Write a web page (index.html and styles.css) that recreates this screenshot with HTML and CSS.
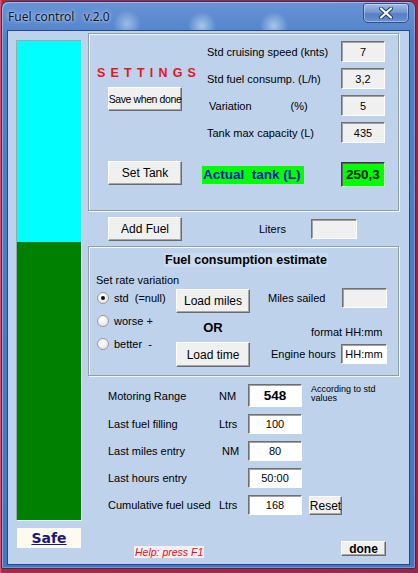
FILE: index.html
```html
<!DOCTYPE html>
<html>
<head>
<meta charset="utf-8">
<link rel="stylesheet" href="styles.css">
</head>
<body>
<div class="window">
  <div class="titlebar">
    <span class="title">Fuel control&nbsp;&nbsp; v.2.0</span>
    <div class="close">
      <svg width="14" height="12" viewBox="0 0 14 12">
        <path d="M2 1.5 L12 10.5 M12 1.5 L2 10.5" stroke="#1c3464" stroke-width="4" stroke-linecap="round"/>
        <path d="M2 1.5 L12 10.5 M12 1.5 L2 10.5" stroke="#ffffff" stroke-width="2.2" stroke-linecap="round"/>
      </svg>
    </div>
  </div>
  <div class="client">
    <div class="leftcol">
      <div class="gauge">
        <div class="g-empty"></div>
        <div class="g-fill"></div>
      </div>
      <div class="safe"><span>Safe</span></div>
    </div>
    <div class="main">
      <div class="frame settings">
        <div class="set-left">
          <div class="set-title">SETTINGS</div>
          <div class="btn btn-save">Save when done</div>
          <div class="btn btn-tank">Set Tank</div>
        </div>
        <div class="set-right">
          <div class="srow"><span class="lbl">Std cruising speed (knts)</span><span class="inp gray">7</span></div>
          <div class="srow"><span class="lbl">Std fuel consump. (L/h)</span><span class="inp gray">3,2</span></div>
          <div class="srow"><span class="lbl lbl-var"><span>Variation</span><span class="pct">(%)</span></span><span class="inp gray">5</span></div>
          <div class="srow"><span class="lbl">Tank max capacity (L)</span><span class="inp gray">435</span></div>
          <div class="srow actual"><span class="actual-lbl">Actual&nbsp; tank (L)</span><span class="inp actual-val">250,3</span></div>
        </div>
      </div>

      <div class="addrow">
        <div class="btn btn-add">Add Fuel</div>
        <span class="liters">Liters</span>
        <span class="inp gray inp-liters"></span>
      </div>

      <div class="frame fuel">
        <div class="fuel-title"><span>Fuel consumption estimate</span></div>
        <div class="rate-lbl">Set rate variation</div>
        <div class="fuel-body">
          <div class="col-a">
            <div class="radio-row r1"><span class="radio checked"></span><span>std&nbsp; (=null)</span></div>
            <div class="radio-row r2"><span class="radio"></span><span>worse +</span></div>
            <div class="radio-row r3"><span class="radio"></span><span>better&nbsp; -</span></div>
          </div>
          <div class="col-b">
            <div class="btn btn-miles">Load miles</div>
            <div class="or">OR</div>
            <div class="btn btn-time">Load time</div>
          </div>
          <div class="col-c">
            <div class="crow c1"><span class="c-lbl">Miles sailed</span><span class="inp gray inp-miles"></span></div>
            <div class="fmt">format HH:mm</div>
            <div class="crow c2"><span class="c-lbl">Engine hours</span><span class="inp white inp-hours">HH:mm</span></div>
          </div>
        </div>
      </div>

      <div class="stats">
        <span class="s-lbl">Motoring Range</span><span class="s-unit">NM</span><span class="inp white big">548</span><span class="note">According to std<br>values</span>
        <span class="s-lbl">Last fuel filling</span><span class="s-unit">Ltrs</span><span class="inp white">100</span><span></span>
        <span class="s-lbl">Last miles entry</span><span class="s-unit nm2">NM</span><span class="inp white">80</span><span></span>
        <span class="s-lbl">Last hours entry</span><span class="s-unit"></span><span class="inp white">50:00</span><span></span>
        <span class="s-lbl">Cumulative fuel used</span><span class="s-unit">Ltrs</span><span class="inp white">168</span><span class="btn btn-reset">Reset</span>
      </div>

      <div class="footer">
        <span class="help">Help: press F1</span>
        <div class="btn btn-done">done</div>
      </div>
    </div>
  </div>
</div>
</body>
</html>
```

FILE: styles.css
```css
* { box-sizing: border-box; margin: 0; padding: 0; }
html, body { width: 418px; height: 573px; overflow: hidden; }
body {
  background: linear-gradient(90deg, #e06080 0, #b8243c 2px, #a82040 100%);
  font-family: "Liberation Sans", Arial, sans-serif;
  font-size: 11px;
  color: #000;
}
.window {
  margin: 1px 0 0 1px;
  width: 415px;
  height: 568px;
  border: 1px solid #22386a;
  border-radius: 7px 7px 2px 2px;
  padding: 0 5px 3px 5px;
  display: flex;
  flex-direction: column;
  background:
    radial-gradient(circle at 125px 22px, rgba(210,230,250,.55), rgba(210,230,250,0) 14px),
    radial-gradient(circle at 200px 24px, rgba(220,240,250,.6), rgba(220,240,250,0) 14px),
    radial-gradient(circle at 272px 24px, rgba(220,240,250,.6), rgba(220,240,250,0) 14px),
    linear-gradient(180deg, #6894d6 0, #4f80c8 40px, #4675c0 100%);
  box-shadow: inset 1px 1px 0 rgba(255,255,255,.35), inset -1px -1px 0 rgba(255,255,255,.25);
}
.titlebar {
  height: 28px;
  display: flex;
  justify-content: space-between;
  align-items: flex-start;
}
.title {
  font-family: "Noto Sans", "Open Sans", sans-serif;
  font-size: 12px;
  line-height: 16px;
  margin: 7px 0 0 1px;
  color: #0c1424;
  text-shadow: 0 0 5px rgba(255,255,255,.7), 0 0 2px rgba(255,255,255,.6);
}
.close {
  margin: 1px 1px 0 0;
  width: 46px;
  height: 20px;
  border: 1px solid #31508c;
  border-radius: 3px 3px 5px 5px;
  background: linear-gradient(180deg, #9fbbe6 0, #7498d4 45%, #5680c4 55%, #6990d2 100%);
  box-shadow: inset 0 0 0 1px rgba(255,255,255,.35);
  display: flex;
  align-items: center;
  justify-content: center;
}
.client {
  flex: 1;
  background: #bed2eb;
  border: 1px solid #24488e;
  display: flex;
}
.leftcol {
  width: 74px;
  padding: 9px 0 0 8px;
  display: flex;
  flex-direction: column;
}
.gauge {
  width: 66px;
  height: 481px;
  border: 1px solid;
  border-color: #9aa8b6 #e4fcfc #e4fcfc #9aa8b6;
  display: flex;
  flex-direction: column;
}
.g-empty { height: 201px; background: #00ffff; }
.g-fill { flex: 1; background: #008000; }
.safe {
  margin: 7px 0 0 1px;
  width: 64px;
  height: 20px;
  background: #fffaf0;
  text-align: center;
  font-family: "DejaVu Sans", Verdana, sans-serif;
  font-weight: bold;
  font-size: 14px;
  line-height: 20px;
  color: #1a1a78;
  text-decoration: underline;
}
.main {
  margin-left: 6px;
  width: 320px;
  padding-top: 2px;
  display: flex;
  flex-direction: column;
}
.frame {
  width: 311px;
  border: 1px solid #8d9db2;
  box-shadow: inset 1px 1px 0 #f4f8fc, 1px 1px 0 #f4f8fc;
}
.settings { height: 178px; display: flex; }
.set-left {
  width: 111px;
  padding: 32px 0 0 8px;
  display: flex;
  flex-direction: column;
}
.set-title {
  font-family: "Liberation Sans", Arial, sans-serif;
  font-weight: bold;
  font-size: 12.5px;
  line-height: 15px;
  letter-spacing: 5.2px;
  color: #e8141e;
}
.btn {
  background: #f0f0f0;
  border: 1px solid;
  border-color: #ffffff #6b6b6b #6b6b6b #ffffff;
  box-shadow: inset -1px -1px 0 #a6a6a6;
  display: flex;
  align-items: center;
  justify-content: center;
  font-size: 11px;
  color: #000;
  white-space: nowrap;
}
.btn-save { margin: 6px 0 0 11px; width: 74px; height: 24px; font-size: 10.5px; letter-spacing: -0.4px; }
.btn-tank { margin: 50px 0 0 11px; width: 74px; height: 24px; font-size: 12px; }
.set-right { flex: 1; padding-top: 7px; display: flex; flex-direction: column; }
.srow { display: flex; align-items: center; height: 21px; margin-top: 6px; }
.srow:first-child { margin-top: 0; }
.lbl { width: 141px; padding-left: 7px; white-space: nowrap; }
.lbl-var { display: flex; padding-left: 9px; }
.lbl-var .pct { margin-left: 39px; }
.inp {
  width: 44px;
  height: 21px;
  border: 1px solid;
  border-color: #707070 #ffffff #ffffff #707070;
  box-shadow: inset 1px 1px 0 #a0a0a0;
  display: flex;
  align-items: center;
  justify-content: center;
  font-size: 11px;
  white-space: nowrap;
}
.gray { background: #f0f0f0; }
.white { background: #ffffff; }
.srow.actual { margin-top: 19px; height: 25px; }
.actual-lbl {
  display: block;
  flex: none;
  width: 139px;
  margin-left: 2px;
  background: linear-gradient(90deg, #00ff00 0, #00ff00 102px, transparent 102px);
  height: 18px;
  line-height: 18px;
  font-weight: bold;
  font-size: 13.5px;
  color: #0a14c8;
  padding-left: 1px;
}
.actual-val {
  height: 25px;
  background: #00ff00;
  border-color: #3a3a3a #c0ffc0 #c0ffc0 #3a3a3a;
  box-shadow: inset 1px 1px 0 #606060;
  font-weight: bold;
  font-size: 13.5px;
  color: #0a200a;
}
.addrow { margin-top: 6px; height: 24px; display: flex; align-items: center; }
.btn-add { margin-left: 20px; width: 74px; height: 24px; font-size: 12px; }
.liters { width: 52px; margin-left: 77px; font-size: 11px; }
.inp-liters { width: 46px; height: 20px; }
.fuel { margin-top: 5px; height: 130px; display: flex; flex-direction: column; }
.fuel-title { padding: 6px 0 0 5px; text-align: center; line-height: 15px; }
.fuel-title span {
  background: #c8dbf0;
  font-weight: bold;
  font-size: 12.5px;
  padding: 0 1px;
}
.rate-lbl { margin-top: 5px; padding-left: 7px; line-height: 14px; font-size: 11px; }
.fuel-body { display: flex; }
.col-a { width: 87px; padding-left: 8px; display: flex; flex-direction: column; }
.radio-row { display: flex; align-items: center; font-size: 11px; }
.r1 { height: 22px; }
.r2 { height: 24px; }
.r3 { height: 22px; }
.radio {
  width: 12px;
  height: 12px;
  border-radius: 50%;
  border: 1px solid #9a9a9a;
  background: radial-gradient(circle at 40% 35%, #ffffff 0, #f0f0f0 50%, #d6d6d6 100%);
  margin-right: 5px;
  display: flex;
  align-items: center;
  justify-content: center;
}
.radio.checked::after {
  content: "";
  width: 4px;
  height: 4px;
  border-radius: 50%;
  background: #101010;
}
.col-b { width: 74px; display: flex; flex-direction: column; }
.btn-miles { margin-top: 2px; height: 24px; font-size: 12px; }
.or { height: 29px; line-height: 29px; text-align: center; font-weight: bold; font-size: 13px; }
.btn-time { height: 25px; font-size: 12px; }
.col-c { flex: 1; padding-right: 11px; display: flex; flex-direction: column; }
.crow { display: flex; align-items: center; height: 20px; }
.c1 { margin-top: 1px; }
.c1 .c-lbl { margin-left: 18px; }
.c2 { margin-top: 4px; }
.c2 .c-lbl { margin-left: 21px; }
.c-lbl { font-size: 11px; }
.inp-miles { margin-left: auto; width: 45px; height: 20px; }
.inp-hours { margin-left: auto; width: 46px; height: 20px; font-size: 11px; }
.fmt { margin-top: 16px; line-height: 16px; padding-left: 61px; font-size: 11px; }
.stats {
  margin-top: 8px;
  padding-left: 20px;
  display: grid;
  grid-template-columns: 111px 29px 54px auto;
  grid-template-rows: 23px 20px 20px 20px 20px;
  row-gap: 7px;
  align-items: center;
}
.stats .inp { width: 54px; height: 20px; font-size: 11px; }
.stats .inp.big { height: 23px; font-weight: bold; font-size: 13.5px; }
.s-lbl { font-size: 11px; white-space: nowrap; }
.s-unit { font-size: 11px; }
.nm2 { padding-left: 3px; }
.note {
  align-self: start;
  margin: 1px 0 0 9px;
  font-size: 9px;
  line-height: 9px;
}
.btn-reset {
  margin-left: 7px;
  width: 33px;
  height: 19px;
  font-size: 12px;
  align-self: end;
}
.footer { margin-top: 26px; display: flex; align-items: flex-start; }
.help {
  margin: 5px 0 0 46px;
  height: 12px;
  line-height: 12px;
  background: #f6eef2;
  color: #e01020;
  font-style: italic;
  font-size: 10.5px;
  padding: 0 1px;
}
.btn-done {
  margin-left: auto;
  margin-right: 22px;
  width: 45px;
  height: 15px;
  font-weight: bold;
  font-size: 12px;
}
```
